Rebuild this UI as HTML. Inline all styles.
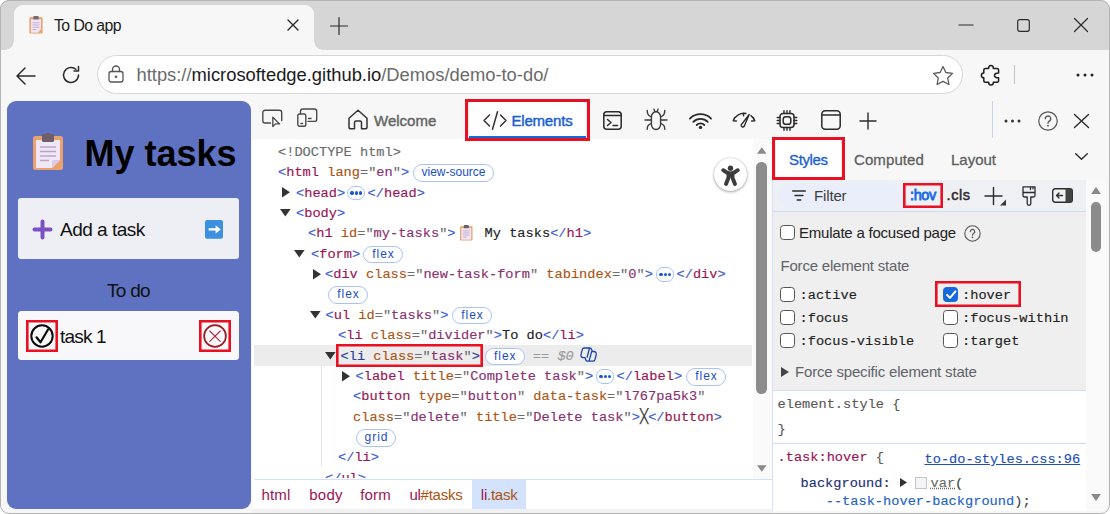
<!DOCTYPE html>
<html lang="en">
<head>
<meta charset="utf-8">
<title>To Do app</title>
<style>
*{box-sizing:border-box;margin:0;padding:0}
html,body{width:1110px;height:514px;overflow:hidden;background:#fff}
body{font-family:"Liberation Sans",sans-serif;color:#1b1b1b;position:relative}
.abs{position:absolute}
#win{position:absolute;left:0;top:0;width:1110px;height:514px;border-radius:9px;background:#f7f7f7;overflow:hidden}
#winb{position:absolute;left:0;top:0;width:1110px;height:514px;border-radius:9px;border:1px solid #b4b4b4;pointer-events:none}
#titlebar{position:absolute;left:0;top:0;width:1110px;height:50px;background:#d6d6d6}
#tab{position:absolute;left:14px;top:4.500px;width:300px;height:46px;background:#f7f7f7;border-radius:9px 9px 0 0}
#tab:before,#tab:after{content:"";position:absolute;bottom:1px;width:9px;height:9px;background:radial-gradient(circle at 0 0,transparent 8.5px,#f7f7f7 9px)}
#tab:before{left:-9px}
#tab:after{right:-9px;transform:scaleX(-1)}
#toolbar{position:absolute;left:0;top:49.500px;width:1110px;height:51.500px;background:#f7f7f7}
#addr{position:absolute;left:97px;top:5.600px;width:866px;height:39.400px;border-radius:20px;background:#fff;border:1px solid #d6d6d6}
.ui{font-family:"Liberation Sans",sans-serif;white-space:pre;position:absolute;line-height:1}
.mono{font-family:"Liberation Mono",monospace;font-size:13.67px;white-space:pre}
#page{position:absolute;left:7px;top:101px;width:244px;height:408px;background:#5f72c2;border-radius:9px}
#dt{position:absolute;left:252px;top:101px;width:853px;height:410px;background:#fff}
#dttool{position:absolute;left:0;top:0;width:853px;height:38px;background:#f7f7f7}
svg{position:absolute;overflow:visible}
.ic{fill:none;stroke:#2b2b2b;stroke-width:1.5;stroke-linecap:round;stroke-linejoin:round}
.redbox{position:absolute;border:3px solid #e81123}
.rb{position:absolute;box-shadow:inset 0 0 0 2.600px #e81123}
/* DOM tree */
#dom{position:absolute;left:2px;top:38px;width:516px;height:339px;background:#fff;overflow:hidden}
.row{position:absolute;left:0;height:20.4px;line-height:20.4px;white-space:pre;font-family:"Liberation Mono",monospace;font-size:13.67px;color:#222;-webkit-text-stroke:0.150px}
.b{color:#3b5bd6}.t{color:#9a1453}.an{color:#ad5311}.q{color:#6e6e6e}.av{color:#8a2f6f}.g{color:#6b6b6b}
.pill{position:absolute;height:17.600px;border:1px solid #a9c2f5;border-radius:9px;background:#fff;color:#1a4fc4;font-family:"Liberation Sans",sans-serif;font-size:12px;line-height:15px;text-align:center}
.pill.sp{letter-spacing:1px;padding-left:1px}
.tri{position:absolute;width:0;height:0}
.tri.r{border-left:8px solid #444;border-top:5px solid transparent;border-bottom:5px solid transparent}
.tri.d{border-top:8px solid #444;border-left:5px solid transparent;border-right:5px solid transparent}
.dots{position:absolute;width:17.600px;height:14.400px;border:1px solid #a9c2f5;border-radius:7px;background:#fff}
.dots i{position:absolute;top:4.700px;width:3.400px;height:3.400px;border-radius:50%;background:#1a56d6}
.cr{top:7.500px;font-size:15px;color:#9a1453;letter-spacing:-0.250px}
/* styles pane */
#sp{position:absolute;left:520px;top:38px;width:333px;height:372px;background:#fff}
.cb{position:absolute;width:15px;height:15px;border:1px solid #555;border-radius:3.500px;background:#fff;margin:-0.500px 0 0 -0.800px}
</style>
</head>
<body>
<div id="win">
  <div id="titlebar">
    <div id="tab">
      <svg style="left:15px;top:11px" width="14" height="18" viewBox="0 0 18 20" preserveAspectRatio="none"><rect x="0.5" y="1.5" width="17" height="18" rx="1.5" fill="#e8a069"/><rect x="2.5" y="3.5" width="13" height="15" fill="#f1e4f3"/><rect x="5.5" y="0" width="7" height="4" rx="1" fill="#7a6a74"/><path d="M4.5 7.5h9M4.5 10h9M4.5 12.500h9M4.500 15h5" stroke="#b9a3c6" stroke-width="1" fill="none"/><path d="M15.5 14.500v4h-4z" fill="#e8a069"/></svg>
      <div class="ui" style="left:40px;top:13.600px;font-size:15.800px;letter-spacing:-0.550px;color:#1b1b1b">To Do app</div>
      <svg style="left:273px;top:14px" width="12" height="12" viewBox="0 0 12 12"><path d="M1 1l10 10M11 1L1 11" class="ic" style="stroke-width:1.400"/></svg>
    </div>
    <svg style="left:329.500px;top:17px" width="18" height="18" viewBox="0 0 18 18"><path d="M9 0.500v17M0.500 9h17" class="ic" style="stroke-width:1.200"/></svg>
    <svg style="left:959px;top:24px" width="14" height="2" viewBox="0 0 14 2"><path d="M0 1h14" class="ic" style="stroke-width:1.200"/></svg>
    <svg style="left:1017px;top:19px" width="13" height="13" viewBox="0 0 13 13"><rect x="0.700" y="0.700" width="11.600" height="11.600" rx="2" class="ic" style="stroke-width:1.200"/></svg>
    <svg style="left:1074px;top:18px" width="14" height="14" viewBox="0 0 14 14"><path d="M0.500 0.500l13 13M13.500 0.500l-13 13" class="ic" style="stroke-width:1.200"/></svg>
  </div>
  <div id="toolbar">
    <svg style="left:16px;top:17px" width="20" height="18" viewBox="0 0 20 18"><path d="M19 9H1.500M9 1L1 9l8 8" class="ic" style="stroke-width:1.500"/></svg>
    <svg style="left:61px;top:15.500px" width="20" height="20" viewBox="0 0 20 20"><path d="M17.500 10a7.500 7.500 0 1 1-2.600-5.700M17.500 1.500v4.500h-4.500" class="ic" style="stroke-width:1.500"/></svg>
    <div id="addr">
      <svg style="left:10.300px;top:9.300px" width="16" height="18" viewBox="0 0 16 18"><rect x="1" y="6.500" width="14" height="10.500" rx="2.200" class="ic" style="stroke:#555;stroke-width:1.300"/><path d="M4.500 6.500V4.500a3.500 3.500 0 0 1 7 0v2" class="ic" style="stroke:#555;stroke-width:1.300"/><circle cx="8" cy="11.800" r="1.300" fill="#555"/></svg>
      <div class="ui" style="left:38.500px;top:10.200px;font-size:18.350px;color:#6b6b6b">https://<span style="color:#1b1b1b">microsoftedge.github.io</span>/Demos/demo-to-do/</div>
      <svg style="left:834.300px;top:9px" width="22" height="21" viewBox="0 0 22 21"><path d="M11 1.500l2.900 6 6.600.900-4.800 4.600 1.200 6.500L11 16.400l-5.900 3.100 1.200-6.500L1.500 8.400l6.600-.900z" class="ic" style="stroke:#5a5a5a;stroke-width:1.300"/></svg>
    </div>
    <svg style="left:979.500px;top:15.500px" width="20" height="21" viewBox="0 0 20 21"><path d="M5.300 3.600H8.600C8.600 1.500 9.600 .6 11 .6S13.400 1.500 13.400 3.600H17.100a1.500 1.500 0 0 1 1.500 1.500V8C16.500 8 14.500 8.600 14.500 10.400S16.500 12.800 18.600 12.800V15.700a1.500 1.500 0 0 1-1.500 1.500H13.400C13.400 19.200 12.400 20 11 20S8.600 19.200 8.600 17.200H5.300a1.500 1.500 0 0 1-1.500-1.500V12.800C2.200 12.800 1.400 11.800 1.400 10.400S2.200 8 3.800 8V5.100a1.500 1.500 0 0 1 1.500-1.500z" class="ic" style="stroke:#1f1f1f;stroke-width:1.500"/></svg>
    <div class="abs" style="left:1014px;top:15.500px;width:1px;height:19px;background:#c4c4c4"></div>
    <svg style="left:1075.500px;top:23.500px" width="18" height="4" viewBox="0 0 18 4"><circle cx="2" cy="2" r="1.500" fill="#222"/><circle cx="9" cy="2" r="1.500" fill="#222"/><circle cx="16" cy="2" r="1.500" fill="#222"/></svg>
  </div>
  <div id="page">
    <svg style="left:26px;top:32px" width="30" height="37" viewBox="0 0 30 37"><rect x="0" y="3" width="30" height="34" rx="2.500" fill="#e9a26b"/><rect x="3" y="7" width="24" height="28" fill="#f0e6f4"/><path d="M27 27v8h-8z" fill="#e9a26b"/><path d="M19 35l8-8h-6a2 2 0 0 0-2 2z" fill="#dcc9e6"/><rect x="9" y="1" width="12" height="8" rx="1.500" fill="#6f5f6b"/><rect x="12.500" y="0" width="5" height="4" rx="1.500" fill="#6f5f6b"/><path d="M7 14h16M7 18.500h16M7 23h16M7 27.500h9" stroke="#b8a5c8" stroke-width="1.600" fill="none"/></svg>
    <div class="ui" style="left:77.500px;top:35px;font-size:36px;font-weight:bold;color:#000;letter-spacing:0px">My tasks</div>
    <div class="abs" style="left:11px;top:97px;width:221px;height:61px;background:#eeeff4;border-radius:3px"></div>
    <svg style="left:26px;top:119px" width="19" height="19" viewBox="0 0 19 19"><path d="M9.500 1.500v16M1.500 9.500h16" stroke="#7d4fc4" stroke-width="4" stroke-linecap="round" fill="none"/></svg>
    <div class="ui" style="left:53px;top:119px;font-size:19px;color:#111;letter-spacing:-0.500px">Add a task</div>
    <svg style="left:198px;top:119.300px" width="18" height="18.700" viewBox="0 0 18 18.700"><rect x="0" y="0" width="18" height="18.700" rx="2" fill="#3d8fe0"/><path d="M3.600 9.400h8" stroke="#fff" stroke-width="2.300" fill="none"/><path d="M10.600 5.200L15.800 9.400 10.600 13.600z" fill="#fff"/></svg>
    <div class="ui" style="left:100px;top:180px;font-size:19px;color:#111;letter-spacing:-0.700px">To do</div>
    <div class="abs" style="left:11px;top:209.800px;width:221px;height:49px;background:#f8f8fb;border-radius:3.500px"></div>
    <div class="rb" style="left:19.100px;top:219.200px;width:31.800px;height:31.500px"></div>
    <svg style="left:23px;top:223px" width="24" height="24" viewBox="0 0 24 24"><circle cx="12" cy="12" r="10.700" fill="none" stroke="#0a0a0a" stroke-width="2"/><path d="M6.500 13.300l4 5 7.400-12.600" fill="none" stroke="#0a0a0a" stroke-width="2.200" stroke-linecap="round" stroke-linejoin="round"/></svg>
    <div class="ui" style="left:53px;top:226px;font-size:19px;color:#111;letter-spacing:-0.800px">task 1</div>
    <div class="rb" style="left:192.100px;top:219.200px;width:31.700px;height:31.700px"></div>
    <svg style="left:195.800px;top:222.900px" width="24" height="24" viewBox="0 0 24 24"><circle cx="12" cy="12" r="10.900" fill="none" stroke="#9c1c1c" stroke-width="1.700"/><path d="M6.800 7l10.400 10.400M17.200 7L6.800 17.400" stroke="#b02a4a" stroke-width="1.100" stroke-linecap="round" fill="none"/></svg>
  </div>
  <div id="dt">
    <div id="dttool">
      <svg style="left:10px;top:8px" width="21" height="18" viewBox="0 0 21 18"><path d="M8.500 14H3A2.200 2.200 0 0 1 .8 11.800V3.500A2.200 2.200 0 0 1 3 1.300h14.500A2.200 2.200 0 0 1 19.700 3.500v8" class="ic" style="stroke:#4a4a4a;stroke-width:1.400"/><path d="M10.800 8.200v9.300l2.700-2.600h4.100z" class="ic" style="stroke:#4a4a4a;stroke-width:1.300"/></svg>
      <svg style="left:45px;top:7px" width="21" height="19" viewBox="0 0 21 19"><path d="M3.500 5.500V3.200A2.200 2.200 0 0 1 5.700 1H17.500A2.200 2.200 0 0 1 19.700 3.200v8A2.200 2.200 0 0 1 17.500 13.400h-6.500" class="ic" style="stroke:#4a4a4a;stroke-width:1.400"/><rect x="0.800" y="6" width="8" height="12.200" rx="1.800" class="ic" style="stroke:#4a4a4a;stroke-width:1.400"/><path d="M4 15.500h1.600M11.500 10.500h2.500" class="ic" style="stroke:#4a4a4a;stroke-width:1.400"/></svg>
      <svg style="left:96px;top:8px" width="20" height="21" viewBox="0 0 20 21"><path d="M1 9.200L10 1.200l9 8V18a1.800 1.800 0 0 1-1.800 1.800H13.500v-6.300a1.500 1.500 0 0 0-1.500-1.500H8a1.500 1.500 0 0 0-1.500 1.500v6.300H2.800A1.800 1.800 0 0 1 1 18z" class="ic" style="stroke:#333;stroke-width:1.500"/></svg>
      <div class="ui" style="left:122px;top:12px;font-size:15px;color:#666;letter-spacing:0;-webkit-text-stroke:0.450px">Welcome</div>
      <div class="abs" style="left:214px;top:-1px;width:123px;height:41px;background:#fff"></div>
      <div class="abs" style="left:217px;top:34.5px;width:117px;height:3.500px;background:#0f6cdc"></div>
      <svg style="left:231px;top:10px" width="24" height="19" viewBox="0 0 24 19"><path d="M6.500 4L1 9.500 6.500 15M17.500 4L23 9.500 17.500 15M14.500 .800L9.500 18.200" class="ic" style="stroke:#333;stroke-width:1.500"/></svg>
      <div class="ui" style="left:259.5px;top:12px;font-size:15px;color:#1a5fd0;letter-spacing:-0.200px;-webkit-text-stroke:0.450px">Elements</div>
      <svg style="left:351px;top:10px" width="19" height="19" viewBox="0 0 19 19"><rect x="0.800" y="0.800" width="17.400" height="17.400" rx="3" class="ic" style="stroke-width:1.500"/><path d="M.8 4.600h17.400M4.500 8.500l3.500 3-3.500 3M10 14.500h4.500" class="ic" style="stroke-width:1.500"/></svg>
      <svg style="left:393px;top:8px" width="22" height="21" viewBox="0 0 22 21"><path d="M6.400 8a4.600 5.200 0 0 1 9.200 0v7.300a4.600 5.200 0 0 1-9.200 0zM9 .2l.8 2.300M13 .2l-.8 2.300M6.400 11H0M15.600 11H22M6.400 7.800C3.500 7 2.200 5 2.200 1.500M15.600 7.800c2.900-.8 4.200-2.800 4.200-6.300M6.400 14.600c-2.900.5-4.200 2.200-4.200 5.600M15.600 14.600c2.900.5 4.200 2.200 4.200 5.600" class="ic" style="stroke:#3a3a3a;stroke-width:1.400"/></svg>
      <svg style="left:436.500px;top:11px" width="23" height="17" viewBox="0 0 23 17"><path d="M.9 6.600a15 15 0 0 1 21.200 0M4.300 9.900a10.200 10.200 0 0 1 14.400 0M7.700 13a5.400 5.400 0 0 1 7.600 0" class="ic" style="stroke-width:1.800"/><circle cx="11.500" cy="15.400" r="1.700" fill="#2b2b2b"/></svg>
      <svg style="left:480px;top:11px" width="24" height="16" viewBox="0 0 24 16"><path d="M1.200 8.800A11.500 11.500 0 0 1 14 1.500M19 3.600A11.500 11.500 0 0 1 22.800 8.800M1.200 8.800l3.200.2M1.200 8.800L2.600 5.600M22.800 8.800l-3.200.2M22.800 8.800l-1.400-3.200M11.300 1.300l.3 2.500" class="ic" style="stroke-width:1.400"/><path d="M17.200 2.500L12.200 14.300a1.700 1.700 0 0 1-3-1.400z" class="ic" style="stroke-width:1.400"/></svg>
      <svg style="left:524px;top:9px" width="22" height="21" viewBox="0 0 22 21"><rect x="4" y="3.500" width="14" height="14" rx="3" class="ic" style="stroke-width:1.500"/><rect x="7.200" y="6.700" width="7.600" height="7.600" rx="2.600" class="ic" style="stroke-width:1.500"/><path d="M8 3.500V.8M11 3.500V.8M14 3.500V.8M8 20.200v-2.700M11 20.200v-2.700M14 20.200v-2.700M4 7.500H1.200M4 10.500H1.200M4 13.500H1.200M18 7.500h2.800M18 10.500h2.800M18 13.500h2.800" class="ic" style="stroke-width:1.400"/></svg>
      <svg style="left:569px;top:9px" width="20" height="20" viewBox="0 0 20 20"><rect x="0.800" y="0.800" width="18.400" height="18.400" rx="3.500" class="ic" style="stroke-width:1.500"/><path d="M.8 5h18.400" class="ic" style="stroke-width:1.500"/></svg>
      <svg style="left:607.5px;top:11.5px" width="16" height="16" viewBox="0 0 16 16"><path d="M8 0v16M0 8h16" class="ic" style="stroke-width:1.400"/></svg>
      <div class="abs" style="left:740px;top:0px;width:1px;height:37px;background:#c9d2e6"></div>
      <svg style="left:752px;top:18px" width="17" height="4" viewBox="0 0 17 4"><circle cx="2" cy="2" r="1.500" fill="#333"/><circle cx="8.500" cy="2" r="1.500" fill="#333"/><circle cx="15" cy="2" r="1.500" fill="#333"/></svg>
      <svg style="left:786px;top:10px" width="20" height="20" viewBox="0 0 20 20"><circle cx="10" cy="10" r="9.200" class="ic" style="stroke:#555;stroke-width:1.200"/><path d="M7.300 7.700a2.700 2.700 0 1 1 4 2.400c-.9.600-1.300 1.100-1.300 2.100" class="ic" style="stroke:#555;stroke-width:1.300"/><circle cx="10" cy="14.700" r=".9" fill="#555"/></svg>
      <svg style="left:822px;top:12.5px" width="15" height="14" viewBox="0 0 15 14"><path d="M.5 .5l14 13M14.500 .5l-14 13" class="ic" style="stroke-width:1.400"/></svg>
    </div>
    <div class="rb" style="left:213.400px;top:-1.800px;width:124.300px;height:42.200px;z-index:5;box-shadow:inset 0 0 0 3.100px #e81123"></div>
    <div id="dom">
      <div class="abs" style="left:0;top:206.2px;width:498px;height:20.800px;background:#ececec"></div>
      <div class="abs" style="left:67px;top:227px;width:1px;height:101px;background:#dfe5f2"></div>
      <div class="row" style="left:24.0px;top:3.81px"><span class="g">&lt;!DOCTYPE html&gt;</span></div>
      <div class="row" style="left:24.0px;top:24.19px"><span class="b">&lt;</span><span class="t">html</span> <span class="an">lang</span><span class="q">="</span><span class="av">en</span><span class="q">"</span><span class="b">&gt;</span></div>
      <div class="pill" style="left:159.0px;top:25.18px;width:81px">view-source</div>
      <svg style="left:28.1px;top:48.25px" width="8" height="10.500" viewBox="0 0 8 10.500"><path d="M0 0L8 5.250 0 10.500z" fill="#333"/></svg>
      <div class="row" style="left:42.0px;top:44.56px"><span class="b">&lt;</span><span class="t">head</span><span class="b">&gt;</span></div>
      <div class="dots" style="left:93.0px;top:46.75px"><i style="left:2.300px"></i><i style="left:6.500px"></i><i style="left:10.700px"></i></div>
      <div class="row" style="left:113.6px;top:44.56px"><span class="b">&lt;/</span><span class="t">head</span><span class="b">&gt;</span></div>
      <svg style="left:26.2px;top:70.33px" width="10.600" height="7.500" viewBox="0 0 10.600 7.500"><path d="M0 0L10.600 0 5.300 7.500z" fill="#333"/></svg>
      <div class="row" style="left:42.0px;top:64.94px"><span class="b">&lt;</span><span class="t">body</span><span class="b">&gt;</span></div>
      <div class="row" style="left:54.0px;top:85.31px"><span class="b">&lt;</span><span class="t">h1</span> <span class="an">id</span><span class="q">="</span><span class="av">my-tasks</span><span class="q">"</span><span class="b">&gt;</span></div>
      <svg style="left:205.5px;top:86px" width="12.500" height="15.500" viewBox="0 0 30 37" preserveAspectRatio="none"><rect x="0" y="3" width="30" height="34" rx="2.500" fill="#e9a26b"/><rect x="3" y="7" width="24" height="28" fill="#f0e6f4"/><rect x="9" y="0" width="12" height="8" rx="1.500" fill="#6f5f6b"/><path d="M7 14h16M7 19h16M7 24h16M7 29h9" stroke="#b8a5c8" stroke-width="2" fill="none"/></svg>
      <div class="row" style="left:230.6px;top:85.31px">My tasks<span class="b">&lt;/</span><span class="t">h1</span><span class="b">&gt;</span></div>
      <svg style="left:40.2px;top:111.08px" width="10.600" height="7.500" viewBox="0 0 10.600 7.500"><path d="M0 0L10.600 0 5.300 7.500z" fill="#333"/></svg>
      <div class="row" style="left:57.0px;top:105.69px"><span class="b">&lt;</span><span class="t">form</span><span class="b">&gt;</span></div>
      <div class="pill sp" style="left:109.0px;top:106.67px;width:40px">flex</div>
      <svg style="left:59.1px;top:129.75px" width="8" height="10.500" viewBox="0 0 8 10.500"><path d="M0 0L8 5.250 0 10.500z" fill="#333"/></svg>
      <div class="row" style="left:71.0px;top:126.06px"><span class="b">&lt;</span><span class="t">div</span> <span class="an">class</span><span class="q">="</span><span class="av">new-task-form</span><span class="q">"</span> <span class="an">tabindex</span><span class="q">="</span><span class="av">0</span><span class="q">"</span><span class="b">&gt;</span></div>
      <div class="dots" style="left:402.0px;top:128.25px"><i style="left:2.300px"></i><i style="left:6.500px"></i><i style="left:10.700px"></i></div>
      <div class="row" style="left:422.5px;top:126.06px"><span class="b">&lt;/</span><span class="t">div</span><span class="b">&gt;</span></div>
      <div class="pill sp" style="left:74.0px;top:147.42px;width:40px">flex</div>
      <svg style="left:56.0px;top:172.20px" width="10.600" height="7.500" viewBox="0 0 10.600 7.500"><path d="M0 0L10.600 0 5.300 7.500z" fill="#333"/></svg>
      <div class="row" style="left:71.5px;top:166.81px"><span class="b">&lt;</span><span class="t">ul</span> <span class="an">id</span><span class="q">="</span><span class="av">tasks</span><span class="q">"</span><span class="b">&gt;</span></div>
      <div class="pill sp" style="left:198.0px;top:167.80px;width:40px">flex</div>
      <div class="row" style="left:84.0px;top:187.19px"><span class="b">&lt;</span><span class="t">li</span> <span class="an">class</span><span class="q">="</span><span class="av">divider</span><span class="q">"</span><span class="b">&gt;</span>To do<span class="b">&lt;/</span><span class="t">li</span><span class="b">&gt;</span></div>
      <svg style="left:70.7px;top:212.95px" width="10.600" height="7.500" viewBox="0 0 10.600 7.500"><path d="M0 0L10.600 0 5.300 7.500z" fill="#333"/></svg>
      <div class="row" style="left:86.5px;top:207.56px"><span style="color:#2a3f9c">&lt;li</span> <span class="an">class</span><span class="q">="</span><span class="av">task</span><span class="q">"</span><span style="color:#2a3f9c">&gt;</span></div>
      <div class="pill sp" style="left:231.0px;top:208.55px;width:39.5px">flex</div>
      <div class="row" style="left:278.8px;top:207.56px"><span style="color:#9a9a9a;font-style:italic">== $0</span></div>
      <svg style="left:87.9px;top:231.62px" width="8" height="10.500" viewBox="0 0 8 10.500"><path d="M0 0L8 5.250 0 10.500z" fill="#333"/></svg>
      <div class="row" style="left:101.5px;top:227.94px"><span class="b">&lt;</span><span class="t">label</span> <span class="an">title</span><span class="q">="</span><span class="av">Complete task</span><span class="q">"</span><span class="b">&gt;</span></div>
      <div class="dots" style="left:342.0px;top:230.12px"><i style="left:2.300px"></i><i style="left:6.500px"></i><i style="left:10.700px"></i></div>
      <div class="row" style="left:362.5px;top:227.94px"><span class="b">&lt;/</span><span class="t">label</span><span class="b">&gt;</span></div>
      <div class="pill sp" style="left:432.0px;top:228.92px;width:40px">flex</div>
      <div class="row" style="left:99.0px;top:248.31px"><span class="b">&lt;</span><span class="t">button</span> <span class="an">type</span><span class="q">="</span><span class="av">button</span><span class="q">"</span> <span class="an">data-task</span><span class="q">="</span><span class="av">l767pa5k3</span><span class="q">"</span></div>
      <div class="row" style="left:99.0px;top:268.69px"><span class="an">class</span><span class="q">="</span><span class="av">delete</span><span class="q">"</span> <span class="an">title</span><span class="q">="</span><span class="av">Delete task</span><span class="q">"</span><span class="b">&gt;</span><span style="color:#333">╳</span><span class="b">&lt;/</span><span class="t">button</span><span class="b">&gt;</span></div>
      <div class="pill sp" style="left:102.0px;top:290.05px;width:40px">grid</div>
      <div class="row" style="left:84.0px;top:309.44px"><span class="b">&lt;/</span><span class="t">li</span><span class="b">&gt;</span></div>
      <div class="row" style="left:71.0px;top:329.81px"><span class="b">&lt;/</span><span class="t">ul</span><span class="b">&gt;</span></div>
    </div><!--/dom-->
    <div class="abs" style="left:501px;top:38px;width:18.500px;height:339.5px;background:#fafafa"></div>
    <svg style="left:505px;top:46px" width="9.500" height="7" viewBox="0 0 10 7"><path d="M0 7L5 0l5 7z" fill="#8a8a8a"/></svg>
    <div class="abs" style="left:504.5px;top:60.8px;width:10.500px;height:232px;border-radius:5.200px;background:#8c8c8c;margin-left:-0.500px"></div>
    <svg style="left:505px;top:363.5px" width="9.500" height="7" viewBox="0 0 10 7"><path d="M0 0l5 7 5-7z" fill="#8a8a8a"/></svg>
    <div class="abs" style="left:519.5px;top:38px;width:1px;height:372px;background:#d5e0f7;z-index:3"></div>
    <div class="abs" style="left:461.6px;top:57.2px;width:33px;height:33px;border-radius:50%;background:#fff;box-shadow:0 1px 3px rgba(0,0,0,.35),0 0 1px rgba(0,0,0,.25)"></div>
    <svg style="left:469px;top:63.5px" width="19" height="21" viewBox="0 0 19 21"><circle cx="9.500" cy="3.200" r="2.700" fill="#3c3c3c"/><path d="M2.200 5.200L7.300 8.500h4.400L16.800 5.200M7.600 8L7.400 13 5 19M11.400 8l.2 5L14 19" fill="none" stroke="#3c3c3c" stroke-width="3.900" stroke-linecap="round" stroke-linejoin="round"/><path d="M7 7.500h5v7L9.500 12 7 14.500z" fill="#3c3c3c"/></svg>
    <div class="rb" style="left:84.300px;top:242.900px;width:147.200px;height:23px;z-index:5"></div>
    <svg style="left:328px;top:246px" width="17" height="16" viewBox="0 0 17 16"><path d="M5.300 1h4.200a2.300 2.300 0 0 1 2.200 1.700l.5 1.800h1.700a2.400 2.400 0 0 1 2.300 3l-1.200 5a2.300 2.300 0 0 1-2.200 1.700H7.800a2.300 2.300 0 0 1-2.200-1.700l-.5-1.800H3.300a2.400 2.400 0 0 1-2.300-3l1.200-5A2.300 2.300 0 0 1 4.400 1zM9.500 1L7 10.700M11.700 4.500L9 14.200" fill="none" stroke="#1a47a8" stroke-width="1.300" stroke-linejoin="round"/></svg>
    <div id="crumbs" class="abs" style="left:2px;top:377.5px;width:517.5px;height:30.500px;background:#fff;border-top:1px solid #d5e0f7">
      <div class="abs" style="left:218px;top:0;width:54px;height:29.500px;background:#d3e3fd"></div>
      <div class="ui cr" style="left:7.4px;letter-spacing:0.200px">html</div>
      <div class="ui cr" style="left:55.3px;letter-spacing:0.200px">body</div>
      <div class="ui cr" style="left:106.2px;letter-spacing:0.200px">form</div>
      <div class="ui cr" style="left:155.4px">ul<span style="color:#ad5311">#tasks</span></div>
      <div class="ui cr" style="left:226.8px">li<span style="color:#ad5311">.task</span></div>
    </div>
    <div class="abs" style="left:0;top:408px;width:519.5px;height:4px;background:#f1f1f1"></div>
    <div id="sp">
      <div class="abs" style="left:0;top:0;width:333px;height:41px;background:#f7f7f7"></div>
      <div class="abs" style="left:1px;top:0px;width:71px;height:40px;background:#fff"></div>
      <div class="ui" style="left:17px;top:12.80px;font-size:15px;color:#1a5fd0;letter-spacing:-0.350px;-webkit-text-stroke:0.300px">Styles</div>
      <div class="ui" style="left:82px;top:12.80px;font-size:15px;color:#5f5f5f;letter-spacing:0.100px;-webkit-text-stroke:0.300px">Computed</div>
      <div class="ui" style="left:179px;top:12.80px;font-size:15px;color:#5f5f5f;-webkit-text-stroke:0.300px">Layout</div>
      <svg style="left:303px;top:13.5px" width="13" height="7" viewBox="0 0 13 7"><path d="M.7 .7l5.800 5.600L12.300 .7" class="ic" style="stroke-width:1.400"/></svg>
      <div class="abs" style="left:0;top:40.5px;width:314px;height:32.300px;background:#eff0f4;border-bottom:1px solid #cfdcf5"></div>
      <div class="abs" style="left:6px;top:43.5px;width:124px;height:25.500px;border-radius:13px;background:#e9eefa"></div>
      <svg style="left:19.500px;top:51px" width="14" height="11" viewBox="0 0 14 11"><path d="M.7 1h12.600M3 5.500h8M5.200 10h3.600" class="ic" style="stroke-width:1.400"/></svg>
      <div class="ui" style="left:42px;top:48.5px;font-size:15px;color:#3c3c3c;letter-spacing:-0.150px">Filter</div>
      <div class="ui" style="left:138.0px;top:48.75px;font-size:14.500px;color:#1a6ce8;letter-spacing:-0.400px;-webkit-text-stroke:0.800px">:hov</div>
      <div class="ui" style="left:174.5px;top:48.75px;font-size:14.500px;color:#2b2b2b;letter-spacing:0.600px;-webkit-text-stroke:0.500px">.cls</div>
      <svg style="left:213px;top:47.5px" width="21" height="19" viewBox="0 0 21 19"><path d="M8.500 .5v17M0 9h17" class="ic" style="stroke-width:1.400"/><path d="M21 12.500v6h-6z" fill="#3a3a3a"/></svg>
      <svg style="left:250px;top:46.5px" width="14" height="20" viewBox="0 0 14 20"><path d="M1 .8h12v8.700a1.500 1.500 0 0 1-1.500 1.500H8.800v6.500a1.800 1.800 0 0 1-3.600 0V11H2.500A1.500 1.500 0 0 1 1 9.500zM1 6.500h12M8.500 .8v2.700M11 .8v2" class="ic" style="stroke-width:1.300"/></svg>
      <svg style="left:280px;top:49px" width="21" height="15" viewBox="0 0 21 15"><rect x=".7" y=".7" width="19.600" height="13.600" rx="2.500" class="ic" style="stroke-width:1.400"/><path d="M13.500 .7h4.300a2.500 2.500 0 0 1 2.500 2.500v8.600a2.500 2.500 0 0 1-2.500 2.500h-4.300z" fill="#444"/><path d="M10.500 7.500h-6M7 5L4.500 7.500 7 10" class="ic" style="stroke-width:1.300"/></svg>
      <div class="abs" style="left:314px;top:40.5px;width:20px;height:331.5px;background:#fafafa"></div>
      <svg style="left:318.5px;top:47.5px" width="10" height="7" viewBox="0 0 10 7"><path d="M0 7L5 0l5 7z" fill="#8a8a8a"/></svg>
      <div class="abs" style="left:319px;top:63px;width:9.500px;height:50px;border-radius:5px;background:#8c8c8c"></div>
      <svg style="left:319px;top:355px" width="10" height="7" viewBox="0 0 10 7"><path d="M0 0l5 7 5-7z" fill="#8a8a8a"/></svg>
      <div class="abs" style="left:0;top:72.5px;width:314px;height:179.0px;background:#efefef;border-bottom:1px solid #cfdcf5"></div>
      <div class="cb" style="left:8.5px;top:86.5px"></div>
      <div class="ui" style="left:27px;top:85.5px;font-size:15px;color:#222;letter-spacing:-0.220px">Emulate a focused page</div>
      <svg style="left:192px;top:85.5px" width="17" height="17" viewBox="0 0 17 17"><circle cx="8.500" cy="8.500" r="7.700" class="ic" style="stroke:#555;stroke-width:1.100"/><path d="M6.300 6.600a2.200 2.200 0 1 1 3.300 1.900c-.8.500-1.100.9-1.100 1.700" class="ic" style="stroke:#555;stroke-width:1.200"/><circle cx="8.500" cy="12.400" r=".8" fill="#555"/></svg>
      <div class="ui" style="left:8.5px;top:119.0px;font-size:15px;color:#5f6368;letter-spacing:-0.200px">Force element state</div>
      <div class="cb" style="left:8.5px;top:148.5px"></div>
      <div class="row" style="left:27.5px;top:147.0px;color:#222">:active</div>
      <div class="cb" style="left:171.5px;top:148.5px;background:#1668dc;border-color:#1668dc"><svg style="left:1.800px;top:2.300px" width="10.500" height="9.500" viewBox="0 0 10 9"><path d="M1 4.600l2.800 2.900L9 1.300" fill="none" stroke="#fff" stroke-width="1.900" stroke-linecap="round" stroke-linejoin="round"/></svg></div>
      <div class="row" style="left:190px;top:147.0px;color:#222">:hover</div>
      <div class="cb" style="left:8.5px;top:171px"></div>
      <div class="row" style="left:27.5px;top:169.7px;color:#222">:focus</div>
      <div class="cb" style="left:171.5px;top:171px"></div>
      <div class="row" style="left:190px;top:169.7px;color:#222">:focus-within</div>
      <div class="cb" style="left:8.5px;top:194px"></div>
      <div class="row" style="left:27.5px;top:192.5px;color:#222">:focus-visible</div>
      <div class="cb" style="left:171.5px;top:194px"></div>
      <div class="row" style="left:190px;top:192.5px;color:#222">:target</div>
      <svg style="left:8.5px;top:228px" width="8" height="10" viewBox="0 0 8 10"><path d="M0 0l8 5-8 5z" fill="#444"/></svg>
      <div class="ui" style="left:23px;top:225.0px;font-size:15px;color:#5f6368;letter-spacing:-0.180px">Force specific element state</div>
      <div class="row" style="left:5.5px;top:256.200px;color:#5a5a5a">element.style {</div>
      <div class="row" style="left:5.5px;top:281.200px;color:#5a5a5a">}</div>
      <div class="abs" style="left:0;top:304px;width:314px;height:1px;background:#cfdcf5"></div>
      <div class="row" style="left:5.5px;top:309.1px;color:#5a5a5a"><span style="color:#9a1453">.task:hover</span> {</div>
      <div class="row" style="left:152.5px;top:311px;color:#1b4fb5;text-decoration:underline">to-do-styles.css:96</div>
      <div class="row" style="left:28.5px;top:334.5px;color:#333"><span style="color:#1c2f7a">background</span>:</div>
      <svg style="left:127.5px;top:339px" width="7" height="9" viewBox="0 0 7 9"><path d="M0 0l7 4.500-7 4.500z" fill="#333"/></svg>
      <div class="abs" style="left:142.5px;top:337.5px;width:12px;height:12px;border:1px solid #c4c4c4;background:#f4f4f6"></div>
      <div class="row" style="left:158.5px;top:334.5px;color:#444"><span style="text-decoration:underline dotted;color:#6b6b6b">var</span>(</div>
      <div class="row" style="left:53.7px;top:352.8px;color:#444"><span style="color:#1d63c4">--task-hover-background</span>);</div>
    </div><!--/sp-->
    <div class="rb" style="left:520.300px;top:36px;width:72.700px;height:43.200px;z-index:5;box-shadow:inset 0 0 0 3.100px #e81123"></div>
    <div class="rb" style="left:651.300px;top:81.900px;width:39.700px;height:25.200px;z-index:5"></div>
    <div class="rb" style="left:683.100px;top:179.500px;width:86px;height:26.400px;z-index:5"></div>
  </div>
</div>
<div id="winb"></div>
</body>
</html>
